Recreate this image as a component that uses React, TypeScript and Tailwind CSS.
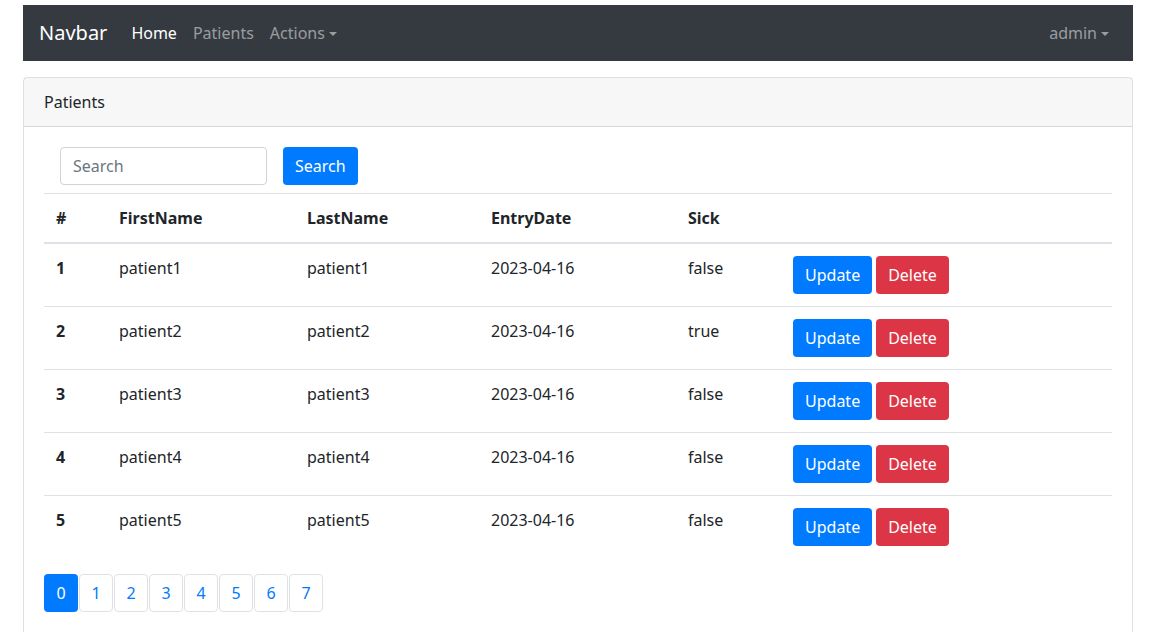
const rows = [
  { id: 1, first: "patient1", last: "patient1", date: "2023-04-16", sick: "false" },
  { id: 2, first: "patient2", last: "patient2", date: "2023-04-16", sick: "true" },
  { id: 3, first: "patient3", last: "patient3", date: "2023-04-16", sick: "false" },
  { id: 4, first: "patient4", last: "patient4", date: "2023-04-16", sick: "false" },
  { id: 5, first: "patient5", last: "patient5", date: "2023-04-16", sick: "false" },
];

const caret = "ml-[4px] inline-block h-0 w-0 border-x-[4.8px] border-t-[4.8px] border-x-transparent border-t-current align-[3px]";
const td = "px-3 pt-3 pb-3 align-top";

export default function App() {
  return (
    <div className="min-h-[632px] bg-white text-[16px] leading-6 text-[#212529]" style={{ fontFamily: '"Noto Sans", "Open Sans", sans-serif' }}>
      <div className="ml-[8px] w-[1140px] px-[15px] pt-[5px]">
        <nav className="flex h-14 items-center bg-[#343a40] px-4">
          <span className="mr-4 text-[20px] leading-[30px] text-white">Navbar</span>
          <a className="px-2 text-white">Home</a>
          <a className="px-2 text-white/50">Patients</a>
          <a className="px-2 text-white/50">
            Actions<span className={caret} />
          </a>
          <a className="ml-auto px-2 text-white/50">
            admin<span className={caret} />
          </a>
        </nav>

        <div className="mt-4 rounded border border-black/[.125]">
          <div className="border-b border-black/[.125] bg-black/[.03] px-5 py-3">Patients</div>
          <div className="p-5">
            <div className="flex gap-4 pl-4 pb-2">
              <input
                placeholder="Search"
                className="h-[38px] w-[207px] rounded border border-[#ced4da] px-3 text-[16px] placeholder:text-[#6c757d] outline-none"
              />
              <button className="h-[38px] rounded bg-[#007bff] px-3 text-white">Search</button>
            </div>
            <table className="w-full table-fixed border-collapse">
              <colgroup>
                <col className="w-[63px]" />
                <col className="w-[188px]" />
                <col className="w-[184px]" />
                <col className="w-[197px]" />
                <col className="w-[105px]" />
                <col />
              </colgroup>
              <thead>
                <tr className="border-t border-b-2 border-[#dee2e6] text-left font-bold">
                  <th className={td}>#</th>
                  <th className={td}>FirstName</th>
                  <th className={td}>LastName</th>
                  <th className={td}>EntryDate</th>
                  <th className={td}>Sick</th>
                  <th className={td}></th>
                </tr>
              </thead>
              <tbody>
                {rows.map((r, i) => (
                  <tr key={r.id} className={i === 0 ? "" : "border-t border-[#dee2e6]"}>
                    <td className={td + " font-bold"}>{r.id}</td>
                    <td className={td}>{r.first}</td>
                    <td className={td}>{r.last}</td>
                    <td className={td}>{r.date}</td>
                    <td className={td}>{r.sick}</td>
                    <td className={td}>
                      <div className="flex gap-1">
                        <button className="h-[38px] rounded bg-[#007bff] px-3 text-white">Update</button>
                        <button className="h-[38px] rounded bg-[#dc3545] px-3 text-white">Delete</button>
                      </div>
                    </td>
                  </tr>
                ))}
              </tbody>
            </table>
            <div className="mt-4 mb-4 flex gap-px">
              {[0, 1, 2, 3, 4, 5, 6, 7].map((n) => (
                <button
                  key={n}
                  className={
                    n === 0
                      ? "h-[38px] w-[34px] rounded bg-[#007bff] text-white"
                      : "h-[38px] w-[34px] rounded border border-[#dee2e6] text-[#007bff]"
                  }
                >
                  {n}
                </button>
              ))}
            </div>
          </div>
        </div>
      </div>
    </div>
  );
}
